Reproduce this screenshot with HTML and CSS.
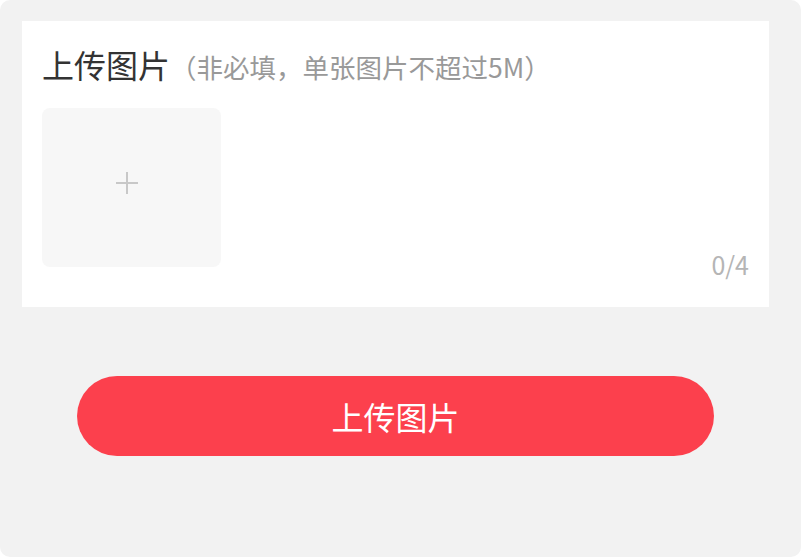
FILE: index.html
```html
<!DOCTYPE html>
<html lang="zh-CN">
<head>
  <meta charset="UTF-8">
  <meta name="viewport" content="width=device-width, initial-scale=1.0">
  <title>上传图片</title>
  <link rel="stylesheet" href="styles.css">
</head>
<body>
  <div class="page">
    <!-- Upload card -->
    <section class="card">
      <div class="card-title">
        <span class="title">上传图片</span><span class="hint">（非必填，单张图片不超过5M）</span>
      </div>

      <div class="upload-row">
        <div class="upload-box">
          <svg class="plus" width="22" height="22" viewBox="0 0 22 22">
            <path d="M11 0 V22 M0 11 H22" stroke="#c8c8c8" stroke-width="2" fill="none"/>
          </svg>
        </div>
        <div class="count">0/4</div>
      </div>
    </section>

    <!-- Submit -->
    <div class="actions">
      <button class="submit-btn">上传图片</button>
    </div>
  </div>
</body>
</html>
```

FILE: styles.css
```css
/* Basic Styles */
* {
  box-sizing: border-box;
}

body {
  margin: 0;
  padding: 0;
  background: #fff;
  font-family: "Noto Sans CJK SC", "Noto Sans", sans-serif;
}

.page {
  width: 801px;
  height: 557px;
  background: #f2f2f2;
  border-radius: 10px;
  padding: 21px 32px 0 22px;
}

/* Card */
.card {
  background: #fff;
  height: 286px;
  padding: 20px 20px 0 20px;
}

.card-title {
  display: flex;
  align-items: baseline;
  height: 67px;
}

.title {
  font-size: 32px;
  color: #333;
}

.hint {
  font-size: 26.5px;
  color: #999;
}

.upload-row {
  display: flex;
  justify-content: space-between;
  align-items: flex-end;
}

.upload-box {
  width: 179px;
  height: 159px;
  background: #f7f7f7;
  border-radius: 8px;
  display: flex;
  align-items: center;
  justify-content: center;
}

.plus {
  margin: 0 10px 9px 0;
}

.count {
  font-size: 25px;
  color: #b5b5b5;
  line-height: 1;
  margin-bottom: -10px;
}

/* Button */
.actions {
  padding: 69px 0 0 55px;
}

.submit-btn {
  width: 637px;
  height: 80px;
  border: none;
  border-radius: 40px;
  background: #fc404d;
  color: #fff;
  font-family: inherit;
  font-size: 32px;
  cursor: pointer;
}
```
